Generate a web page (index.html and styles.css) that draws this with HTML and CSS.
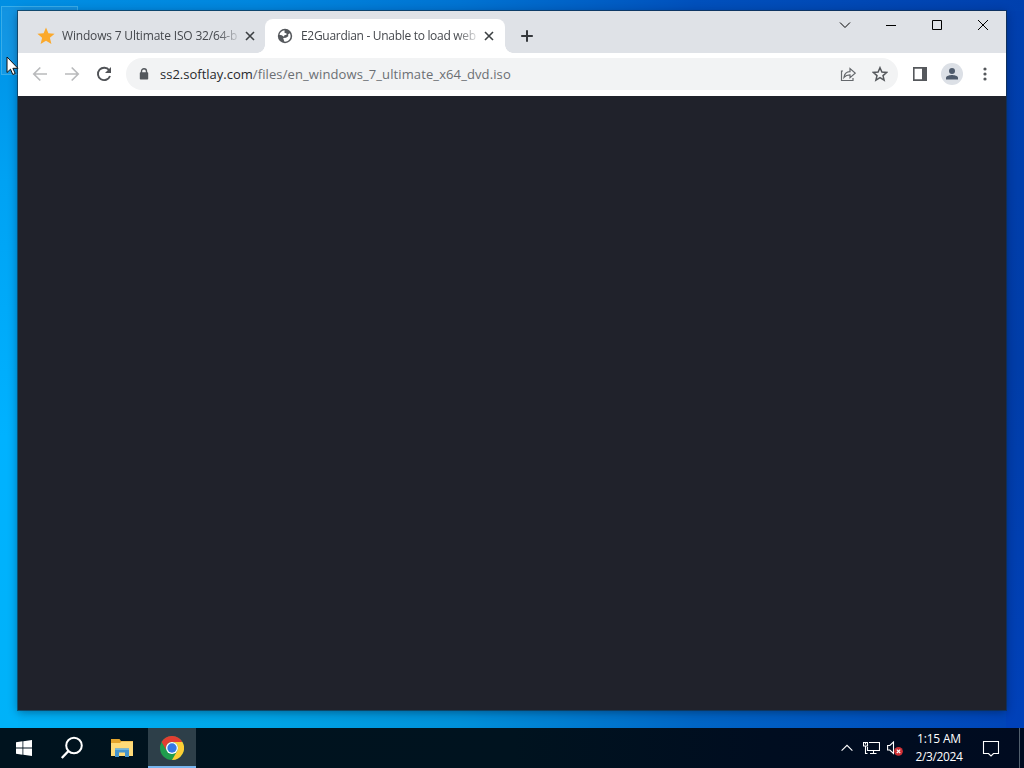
FILE: index.html
```html
<!DOCTYPE html>
<html lang="en">
<head>
	<meta charset="UTF-8">
	<title>E2Guardian - Unable to load website</title>
	<link rel="stylesheet" href="styles.css">
</head>
<body>
	<div class="desktop">
		<div class="selection"></div>
		<div class="window">
			<div class="tabstrip">
				<div class="tab">
					<svg class="favicon" width="18" height="18" viewBox="0 0 18 18"><path fill="#fba92c" d="M9 .6l2.400 5.700 6.200.5-4.700 4 1.500 6.200L9 13.700 3.600 17l1.500-6.200-4.700-4 6.200-.5z"/></svg>
					<span class="title title-first">Windows 7 Ultimate ISO 32/64-b</span>
					<svg class="close" width="10" height="10" viewBox="0 0 10 10"><path d="M1 1l8 8M9 1L1 9"/></svg>
				</div>
				<div class="tab active">
					<svg class="favicon globe" width="16" height="16" viewBox="0 0 16 16"><circle cx="8" cy="8" r="7.200" fill="#55585c"/><path fill="#fff" d="M7.500 2.300c-2.400.2-4.500 2-5.100 4.500l2.400.5 2.200 1.500.4-1.500 2.200-.6-.2-1.500-1.800-.1zM12.600 5.300l-1.500 1.200.2 1.700-2.300 1.500-2.800.4.600 2 .5 1.500c3.400.4 6.300-2.200 6.300-5.600 0-1-.4-1.900-1-2.700z"/></svg>
					<span class="title title-second">E2Guardian - Unable to load web</span>
					<svg class="close" width="10" height="10" viewBox="0 0 10 10"><path d="M1 1l8 8M9 1L1 9"/></svg>
				</div>
				<svg class="new-tab" width="14" height="14" viewBox="0 0 14 14"><path d="M7 1.200v11.600M1.200 7h11.600"/></svg>
				<div class="controls">
					<svg width="46" height="28" viewBox="0 0 46 28"><path d="M18 11.500l5 5 5-5"/></svg>
					<svg width="46" height="28" viewBox="0 0 46 28"><path d="M18 14.500h10"/></svg>
					<svg width="46" height="28" viewBox="0 0 46 28"><path d="M18.500 9.500h9v9h-9z"/></svg>
					<svg width="46" height="28" viewBox="0 0 46 28"><path d="M18 9l10 10M28 9L18 19"/></svg>
				</div>
			</div>
			<div class="toolbar">
				<svg class="nav off" width="16" height="16" viewBox="0 0 16 16"><path d="M15 8H2M8.300 1.500L1.800 8l6.500 6.500"/></svg>
				<svg class="nav off" width="16" height="16" viewBox="0 0 16 16"><path d="M1 8h13M7.700 1.500L14.200 8l-6.500 6.500"/></svg>
				<svg class="nav" width="16" height="16" viewBox="0 0 16 16"><path d="M13.200 4.300A6.200 6.200 0 1 0 14 10"/><path class="solid" d="M15 1v6H9z"/></svg>
				<div class="omnibox">
					<svg class="lock" width="10" height="12" viewBox="0 0 10 12"><path fill="none" stroke="#54585d" stroke-width="1.400" d="M2.500 5V3.200a2.500 2.500 0 0 1 5 0V5"/><rect x=".8" y="4.300" width="8.400" height="7.200" rx=".8" fill="#54585d"/></svg>
					<span class="url"><span class="host">ss2.softlay.com</span>/files/en_windows_7_ultimate_x64_dvd.iso</span>
					<svg class="share" width="16" height="16" viewBox="0 0 16 16"><path d="M3 5H1.500v9.500h11.500V12M4 11.300c.5-3.800 2.500-5.600 6-5.700V2.500l5.200 4.600L10 11.700V8.800c-2.700 0-4.500.7-6 2.500z"/></svg>
					<svg class="star" width="16" height="16" viewBox="0 0 16 16"><path d="M8 1.700l1.900 4.400 4.700.4L11 9.600l1.100 4.600L8 11.700l-4.100 2.500L5 9.600 1.400 6.500l4.700-.4z"/></svg>
				</div>
				<svg class="side" width="16" height="16" viewBox="0 0 16 16"><path fill="none" stroke="#55585c" stroke-width="1.600" d="M1.800 1.900h12.400v12.200H1.800z"/><path fill="#55585c" d="M10 2h4v12h-4z"/></svg>
				<svg class="avatar" width="22" height="22" viewBox="0 0 22 22"><circle cx="11" cy="11" r="11" fill="#dce0e6"/><circle cx="11" cy="8" r="3" fill="#4f5b6c"/><path fill="#4f5b6c" d="M5 16.500v-1.700c0-2 4-2.800 6-2.800s6 .8 6 2.800v1.700z"/></svg>
				<svg class="dots" width="4" height="14" viewBox="0 0 4 14"><circle cx="2" cy="2" r="1.600"/><circle cx="2" cy="7" r="1.600"/><circle cx="2" cy="12" r="1.600"/></svg>
			</div>
			<div class="page"></div>
		</div>
	</div>
	<div class="taskbar">
		<div class="task">
			<svg width="16" height="16" viewBox="0 0 16 16"><path fill="#fff" d="M0 2.200L6.500 1.300v6.200H0zM7.300 1.200L16 0v7.500H7.300zM0 8.400h6.500v6.300L0 13.800zM7.300 8.400H16V16l-8.700-1.200z"/></svg>
		</div>
		<div class="task">
			<svg width="24" height="24" viewBox="0 0 24 24"><circle cx="14" cy="9.500" r="7.800" fill="none" stroke="#fff" stroke-width="2"/><path stroke="#fff" stroke-width="2.400" d="M8.500 15L1.800 22"/></svg>
		</div>
		<div class="task">
			<svg class="folder" width="22" height="20" viewBox="0 0 22 20"><path fill="#e4a52d" d="M0 1h8.500l1.500 2H22v15H0z"/><path fill="#ffdb78" d="M0 5h9l1.500-1.500H22V18H0z"/><path fill="#4594cd" d="M4 10.500h14V19h-4v-4.500H8V19H4z"/><path fill="#71b6df" d="M4 10.500h14v1.500H4z"/></svg>
		</div>
		<div class="task current">
			<svg width="24" height="24" viewBox="0 0 24 24"><circle cx="12" cy="12" r="12" fill="#1f9d4d"/><path fill="#e13e32" d="M1.600 6A12 12 0 0 1 22.400 6H12a6 6 0 0 0-5.200 9z"/><path fill="#fccd35" d="M22.400 6A12 12 0 0 1 12 24l5.200-9A6 6 0 0 0 12 6z"/><circle cx="12" cy="12" r="6" fill="#fff"/><circle cx="12" cy="12" r="4.700" fill="#3478e5"/></svg>
		</div>
		<div class="tray">
			<svg width="12" height="8" viewBox="0 0 12 8"><path d="M.6 6.700L6 1.300l5.400 5.400"/></svg>
			<svg class="network" width="17" height="14" viewBox="0 0 17 14"><path d="M6 1.500h10.500v8H4.500V6M.5 1.500h4v3.500h-4zM2.500 5v7.500h2M10.500 9.500v3M7 12.500h6.500M2.500 1.500v2"/></svg>
			<svg class="volume" width="16" height="15" viewBox="0 0 16 15"><path d="M.6 4.500h2.200L6.500 1v11.500L2.800 9H.6z"/><circle cx="11.500" cy="10.300" r="4.400" fill="#cf3035" stroke="none"/><path d="M9.800 8.600l3.400 3.400M13.200 8.600L9.800 12"/></svg>
			<div class="clock"><span class="time">1:15 AM</span><span class="date">2/3/2024</span></div>
			<svg class="notice" width="18" height="17" viewBox="0 0 18 17"><path d="M1.500 1.500h15v12h-5L9 16l-2.500-2.500h-5z"/></svg>
			<div class="peek"></div>
		</div>
	</div>
	<svg class="cursor" width="13" height="20" viewBox="0 0 13 20"><path fill="#fff" stroke="#111" d="M1 1v15.500l3.500-3.300 2.300 5.300 2.400-1-2.300-5.200h5z"/></svg>
</body>
</html>
```

FILE: styles.css
```css
* {
	box-sizing: border-box;
}
body {
	margin: 0;
	width: 1024px;
	height: 768px;
	overflow: hidden;
	font-family: "Open Sans", "Noto Sans", sans-serif;
}
svg {
	display: block;
	flex: none;
}
.desktop {
	height: 728px;
	padding: 11px 18px 18px;
	background:
		linear-gradient(to right, #008fe3, #0086de 25%, #0073d2 45%, #0050bc 68%, #0040ae) top / 100% 11px no-repeat,
		linear-gradient(to bottom, #008fe3, #00a2f3 25%, #00b2ff 60%, #00b2f8) left / 18px 100% no-repeat,
		linear-gradient(to bottom, #003fae, #003da8 50%, #0041b9) right / 18px 100% no-repeat,
		linear-gradient(to right, #00b2f8, #00a5e6 25%, #0090d9 45%, #0065c5 68%, #0043b8);
}
.selection {
	position: absolute;
	left: 1px;
	top: 6px;
	width: 77px;
	height: 69px;
	border: 1px solid #38ade9;
	background: rgba(70, 160, 220, 0.25);
}
.window {
	position: relative;
	height: 699px;
	display: flex;
	flex-direction: column;
	box-shadow: 0 0 0 1px rgba(20, 45, 65, 0.65), 0 2px 9px rgba(0, 15, 40, 0.45);
}

/* tabs */
.tabstrip {
	height: 42px;
	display: flex;
	background: #dfe2e7;
}
.tab {
	display: flex;
	align-items: center;
	width: 247px;
	height: 34px;
	margin-top: 8px;
	padding: 0 10px 0 19px;
}
.tab.active {
	position: relative;
	width: 240px;
	padding: 0 11px 0 12px;
	background: #fff;
	border-radius: 8px 8px 0 0;
}
.tab.active::before,
.tab.active::after {
	content: "";
	position: absolute;
	bottom: 0;
	width: 8px;
	height: 8px;
}
.tab.active::before {
	left: -8px;
	background: radial-gradient(circle at 0 0, transparent 7.500px, #fff 8px);
}
.tab.active::after {
	right: -8px;
	background: radial-gradient(circle at 100% 0, transparent 7.500px, #fff 8px);
}
.title {
	flex: none;
	width: 176px;
	margin-left: 7px;
	white-space: nowrap;
	font-size: 12px;
	line-height: 18px;
	letter-spacing: -0.18px;
	color: #45484d;
	-webkit-mask-image: linear-gradient(to right, #000 155px, transparent 180px);
}
.title-second {
	margin-left: 8px;
	letter-spacing: -0.3px;
}
.close {
	margin-left: auto;
	fill: none;
	stroke: #3c4043;
	stroke-width: 1.600;
}
.new-tab {
	margin: 18px 0 0 15px;
	stroke: #35383c;
	stroke-width: 2;
}
.controls {
	display: flex;
	margin-left: auto;
	fill: none;
	stroke: #000;
	stroke-width: 1;
}

/* toolbar */
.toolbar {
	height: 43px;
	display: flex;
	align-items: center;
	padding: 0 0 1px 14px;
	background: #fff;
}
.nav {
	margin-right: 16px;
	fill: none;
	stroke: #505357;
	stroke-width: 1.900;
}
.nav.off {
	stroke: #b9babc;
	stroke-width: 1.700;
}
.nav .solid {
	fill: #505357;
	stroke: none;
}
.omnibox {
	display: flex;
	align-items: center;
	width: 772px;
	height: 32px;
	margin-left: -2px;
	padding: 0 10px 0 13px;
	border-radius: 16px;
	background: #f2f3f4;
}
.url {
	margin-left: 11px;
	font-size: 13px;
	line-height: 20px;
	letter-spacing: 0.11px;
	color: #6b6f73;
	white-space: nowrap;
}
.host {
	letter-spacing: 0;
	color: #27292c;
}
.share {
	margin-left: auto;
	fill: none;
	stroke: #65686c;
	stroke-width: 1.200;
}
.star {
	margin-left: 16px;
	fill: none;
	stroke: #55585c;
	stroke-width: 1.500;
}
.side {
	margin-left: 14px;
}
.avatar {
	margin-left: 13px;
}
.dots {
	margin-left: 20px;
	fill: #55585c;
}
.page {
	flex: 1;
	background: #20222b;
}

/* taskbar */
.taskbar {
	display: flex;
	height: 40px;
	background: linear-gradient(to right, #00131e, #00131f 50%, #000d20 75%, #000b20);
}
.task {
	display: flex;
	align-items: center;
	justify-content: center;
	width: 48px;
	height: 40px;
}
.task:nth-child(2) {
	margin-right: 2px;
}
.task:nth-child(3) {
	margin-right: 2px;
}
.task.current {
	border-bottom: 2px solid #77b5ef;
	padding-top: 2px;
	background: #2d3f49;
}
.tray {
	display: flex;
	align-items: center;
	margin-left: auto;
	fill: none;
	stroke: #fff;
	stroke-width: 1.100;
}
.network {
	margin-left: 10px;
}
.volume {
	margin-left: 7px;
}
.clock {
	display: flex;
	flex-direction: column;
	align-items: center;
	width: 50px;
	margin-left: 11px;
	font-size: 12px;
	line-height: 18px;
	letter-spacing: -0.4px;
	color: #fff;
	white-space: nowrap;
}
.time {
	letter-spacing: -0.2px;
}
.notice {
	margin-left: 18px;
}
.peek {
	width: 5px;
	height: 40px;
	margin-left: 19px;
	border-left: 1px solid #52606e;
}
.cursor {
	position: absolute;
	left: 6px;
	top: 56px;
}
```
